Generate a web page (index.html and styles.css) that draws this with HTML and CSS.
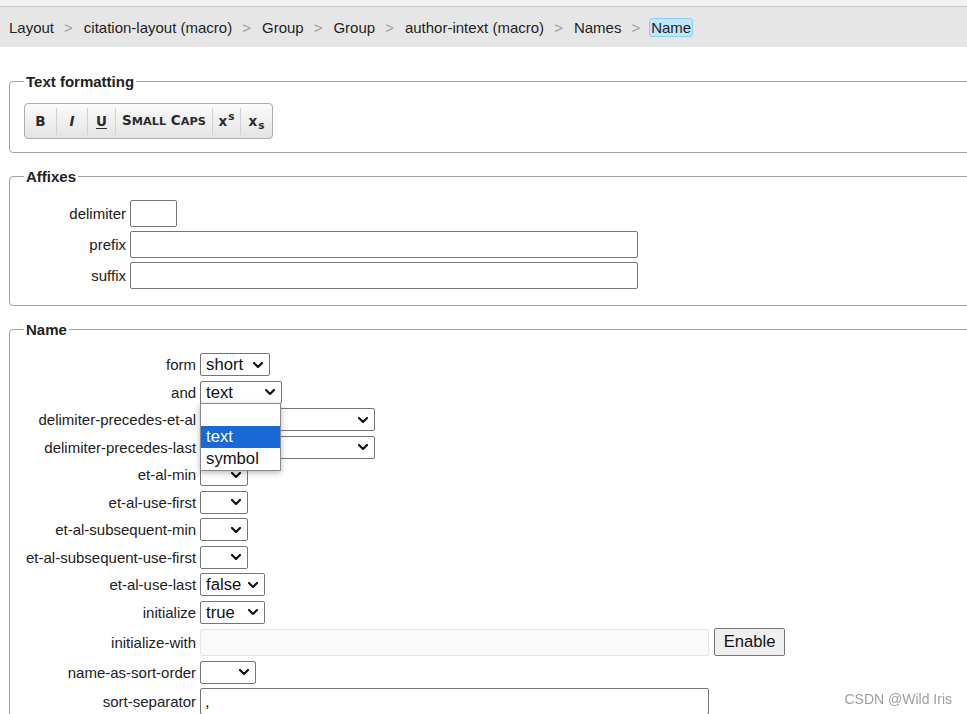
FILE: index.html
```html
<!DOCTYPE html>
<html lang="en">
<head>
<meta charset="utf-8">
<title>Name</title>
<link rel="stylesheet" href="styles.css">
</head>
<body>
<div class="topstrip"></div>
<nav class="crumbs">
  <span class="crumb">Layout</span><span class="sep">&gt;</span>
  <span class="crumb">citation-layout (macro)</span><span class="sep">&gt;</span>
  <span class="crumb">Group</span><span class="sep">&gt;</span>
  <span class="crumb">Group</span><span class="sep">&gt;</span>
  <span class="crumb">author-intext (macro)</span><span class="sep">&gt;</span>
  <span class="crumb">Names</span><span class="sep">&gt;</span>
  <span class="crumb current">Name</span>
</nav>

<div class="content">
  <fieldset class="fs">
    <legend>Text formatting</legend>
    <div class="toolbar">
      <button type="button" class="tb tb-b"><span class="tbl">B</span></button>
      <button type="button" class="tb tb-i"><span class="tbl"><i>I</i></span></button>
      <button type="button" class="tb tb-u"><span class="tbl"><u>U</u></span></button>
      <button type="button" class="tb tb-sc"><span class="tbl">S<span class="small">mall</span>&nbsp;C<span class="small">aps</span></span></button>
      <button type="button" class="tb tb-sup"><span class="tbl">x<sup>s</sup></span></button>
      <button type="button" class="tb tb-sub"><span class="tbl">x<sub>s</sub></span></button>
    </div>
  </fieldset>

  <fieldset class="fs">
    <legend>Affixes</legend>
    <div class="form form-affixes">
      <label class="lbl">delimiter</label>
      <div class="ctl"><input type="text" class="in in-small"></div>
      <label class="lbl">prefix</label>
      <div class="ctl"><input type="text" class="in in-wide"></div>
      <label class="lbl">suffix</label>
      <div class="ctl"><input type="text" class="in in-wide"></div>
    </div>
  </fieldset>

  <fieldset class="fs">
    <legend>Name</legend>
    <div class="form form-name">
      <label class="lbl">form</label>
      <div class="ctl"><span class="sw"><select class="sel w-form"><option>long</option><option selected>short</option><option>count</option></select><svg class="chev" viewBox="0 0 10 6"><path d="M1 1 L5 5 L9 1"/></svg></span></div>

      <label class="lbl">and</label>
      <div class="ctl">
        <span class="sw">
          <select class="sel w-and"><option></option><option selected>text</option><option>symbol</option></select><svg class="chev" viewBox="0 0 10 6"><path d="M1 1 L5 5 L9 1"/></svg>
          <span class="popup">
            <span class="opt"></span>
            <span class="opt active">text</span>
            <span class="opt">symbol</span>
          </span>
        </span>
      </div>

      <label class="lbl">delimiter-precedes-et-al</label>
      <div class="ctl"><span class="sw"><select class="sel w-wide"><option selected></option><option>contextual</option><option>after-inverted-name</option><option>always</option><option>never</option></select><svg class="chev" viewBox="0 0 10 6"><path d="M1 1 L5 5 L9 1"/></svg></span></div>

      <label class="lbl">delimiter-precedes-last</label>
      <div class="ctl"><span class="sw"><select class="sel w-wide"><option selected></option><option>contextual</option><option>after-inverted-name</option><option>always</option><option>never</option></select><svg class="chev" viewBox="0 0 10 6"><path d="M1 1 L5 5 L9 1"/></svg></span></div>

      <label class="lbl">et-al-min</label>
      <div class="ctl"><span class="sw"><select class="sel w-num"><option selected></option><option>1</option><option>2</option></select><svg class="chev" viewBox="0 0 10 6"><path d="M1 1 L5 5 L9 1"/></svg></span></div>

      <label class="lbl">et-al-use-first</label>
      <div class="ctl"><span class="sw"><select class="sel w-num"><option selected></option><option>1</option><option>2</option></select><svg class="chev" viewBox="0 0 10 6"><path d="M1 1 L5 5 L9 1"/></svg></span></div>

      <label class="lbl">et-al-subsequent-min</label>
      <div class="ctl"><span class="sw"><select class="sel w-num"><option selected></option><option>1</option><option>2</option></select><svg class="chev" viewBox="0 0 10 6"><path d="M1 1 L5 5 L9 1"/></svg></span></div>

      <label class="lbl">et-al-subsequent-use-first</label>
      <div class="ctl"><span class="sw"><select class="sel w-num"><option selected></option><option>1</option><option>2</option></select><svg class="chev" viewBox="0 0 10 6"><path d="M1 1 L5 5 L9 1"/></svg></span></div>

      <label class="lbl">et-al-use-last</label>
      <div class="ctl"><span class="sw"><select class="sel w-bool"><option>true</option><option selected>false</option></select><svg class="chev" viewBox="0 0 10 6"><path d="M1 1 L5 5 L9 1"/></svg></span></div>

      <label class="lbl">initialize</label>
      <div class="ctl"><span class="sw"><select class="sel w-bool"><option selected>true</option><option>false</option></select><svg class="chev" viewBox="0 0 10 6"><path d="M1 1 L5 5 L9 1"/></svg></span></div>

      <label class="lbl">initialize-with</label>
      <div class="ctl"><input type="text" class="in in-name" disabled><button type="button" class="btn">Enable</button></div>

      <label class="lbl">name-as-sort-order</label>
      <div class="ctl"><span class="sw"><select class="sel w-nso"><option selected></option><option>first</option><option>all</option></select><svg class="chev" viewBox="0 0 10 6"><path d="M1 1 L5 5 L9 1"/></svg></span></div>

      <label class="lbl">sort-separator</label>
      <div class="ctl"><input type="text" class="in in-name" value=", "></div>
    </div>
  </fieldset>
</div>

<div class="watermark">CSDN @Wild Iris</div>
</body>
</html>
```

FILE: styles.css
```css
html, body {
  margin: 0;
  padding: 0;
  overflow: hidden;
  background: #ffffff;
  font-family: "Liberation Sans", Arial, sans-serif;
  color: #222;
}

.topstrip {
  height: 6px;
  background: #f1f1f1;
  border-bottom: 1px solid #c9c9c9;
}

.crumbs {
  display: flex;
  align-items: center;
  height: 40px;
  padding-left: 9px;
  background: #e6e6e6;
  font-size: 15px;
  line-height: 17px;
  white-space: nowrap;
}

.crumb {
  color: #1e1e1e;
}

.sep {
  color: #9c9c9c;
  margin: 0 11px 0 10px;
}

.crumb.current {
  margin-left: -2px;
  background: #bfe6fb;
  border: 1px solid #8ccff4;
  border-radius: 3px;
  padding: 0 1px;
}

.content {
  width: 1100px;
  padding: 26px 0 0 9px;
}

.fs {
  margin: 15px 0 0;
  padding: 13px 14px 13px;
  border: 1px solid #a3a3a3;
  border-radius: 4px;
  min-width: 0;
}

.content > .fs:first-child {
  margin-top: 0;
}

.fs legend {
  padding: 0 2px;
  font-weight: bold;
  font-size: 15px;
  line-height: 17px;
  color: #222;
}

/* toolbar */
.toolbar {
  display: inline-flex;
  align-items: center;
  height: 36px;
  box-sizing: border-box;
  border: 1px solid #acacac;
  border-radius: 4px;
  background: linear-gradient(#fbfbfb, #e4e4e4);
}

.tb {
  display: flex;
  align-items: center;
  justify-content: center;
  height: 27px;
  padding: 0;
  margin: 0;
  border: 0;
  border-left: 1px solid #d2d2d2;
  background: transparent;
  font-family: "DejaVu Sans", Verdana, sans-serif;
  font-weight: bold;
  font-size: 13.5px;
  line-height: 16px;
  color: #2b2b2b;
  box-sizing: border-box;
}

.tbl {
  display: block;
  white-space: nowrap;
}

.tb-b { border-left: 0; width: 31px; }
.tb-i { width: 31px; }
.tb-u { width: 28px; }
.tb-sc { width: 97px; }
.tb-sup { width: 28px; }
.tb-sub { width: 32px; }

.tb u { text-underline-offset: 2px; }

.tb .small {
  text-transform: uppercase;
  font-size: 11.3px;
}

.tb sup, .tb sub {
  font-size: 10.5px;
  line-height: 0;
}
.tb sup { vertical-align: 6px; margin-left: 1px; }
.tb sub { vertical-align: -3px; margin-left: 1px; }

/* forms */
.form {
  display: grid;
  grid-template-columns: max-content max-content;
  column-gap: 4px;
  align-items: center;
  margin: 2px 0 3px;
}

.form-affixes { row-gap: 4px; }
.form-name { row-gap: 4.5px; }

.lbl {
  min-width: 102px;
  box-sizing: border-box;
  padding-left: 2px;
  text-align: right;
  font-size: 15px;
  line-height: 17px;
  color: #222;
}

.ctl {
  display: flex;
  align-items: center;
}

.in {
  box-sizing: border-box;
  height: 27px;
  margin: 0;
  padding: 0 4px;
  border: 1px solid #767676;
  border-radius: 2px;
  background: #fff;
  font-family: "Liberation Sans", Arial, sans-serif;
  font-size: 16.67px;
  color: #111;
}

.in-small { width: 47px; }
.in-wide { width: 508px; }
.in-name { width: 509px; }

.in:disabled {
  background: #fafafa;
  border-color: #e4e4e4;
}

.btn {
  box-sizing: border-box;
  height: 28px;
  width: 71px;
  margin: 0 0 0 5px;
  padding: 0;
  border: 1px solid #767676;
  border-radius: 2px;
  background: #efefef;
  font-family: "Liberation Sans", Arial, sans-serif;
  font-size: 16.67px;
  color: #111;
}

.sw {
  position: relative;
  display: block;
}

.sel {
  display: block;
  box-sizing: border-box;
  height: 23px;
  margin: 0;
  padding: 0 0 0 5px;
  -webkit-appearance: none;
  appearance: none;
  font-family: "Liberation Sans", Arial, sans-serif;
  font-size: 16.67px;
  line-height: 21px;
  color: #111;
  background: #fff;
  border: 1px solid #767676;
  border-radius: 2px;
}

.chev {
  position: absolute;
  right: 7px;
  top: 50%;
  width: 10px;
  height: 6px;
  margin-top: -3px;
  pointer-events: none;
  fill: none;
  stroke: #111;
  stroke-width: 2.2;
  stroke-linecap: round;
  stroke-linejoin: round;
}

.w-form { width: 70px; }
.w-and { width: 82px; }
.w-wide { width: 175px; }
.w-num { width: 48px; }
.w-bool { width: 65px; }
.w-nso { width: 56px; }

.popup {
  position: absolute;
  left: 0;
  top: calc(100% - 1px);
  z-index: 5;
  width: 81px;
  box-sizing: border-box;
  border: 1px solid #8a8a8a;
  background: #fff;
  box-shadow: 0 2px 6px rgba(0, 0, 0, 0.28);
}

.opt {
  display: block;
  height: 22px;
  line-height: 22px;
  padding-left: 5px;
  font-size: 16.67px;
  color: #111;
}

.opt.active {
  background: #1a68d6;
  color: #fff;
}

.watermark {
  position: fixed;
  right: 15px;
  bottom: 7px;
  font-size: 14px;
  color: #9f9f9f;
  background: rgba(255, 255, 255, 0.6);
}
```
